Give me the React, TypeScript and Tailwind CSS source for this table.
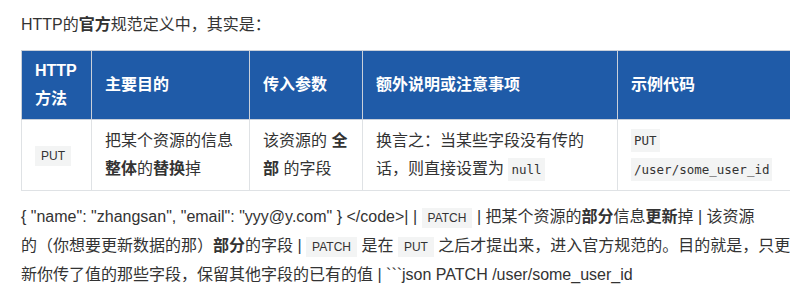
import React from 'react';

const font = { fontFamily: '"Liberation Sans", "Noto Sans CJK SC", sans-serif' };

function Code({ children, mono = false }: { children: React.ReactNode; mono?: boolean }) {
  return (
    <code
      className={
        mono
          ? 'bg-[#f3f4f4] px-[3px] py-[4px] text-[12.5px] text-[#333] font-["DejaVu_Sans_Mono",monospace]'
          : 'bg-[#f3f4f4] px-[6px] py-[3px] text-[12px] text-[#333] font-["Liberation_Sans",sans-serif]'
      }
    >
      {children}
    </code>
  );
}

export default function App() {
  return (
    <div className="w-[790px] h-[288px] overflow-hidden bg-white text-[#333]" style={font}>
      <div className="pl-[21px] pt-[11px]">
        <p className="text-[16px] leading-[27px] whitespace-nowrap">
          HTTP的<b>官方</b>规范定义中，其实是：
        </p>

        <table className="mt-[12px] w-[830px] table-fixed border-collapse text-[16px] leading-[28px]">
          <colgroup>
            <col className="w-[70px]" />
            <col className="w-[158px]" />
            <col className="w-[113px]" />
            <col className="w-[255px]" />
            <col className="w-[234px]" />
          </colgroup>
          <thead>
            <tr className="bg-[#1f5ba8] text-white font-bold">
              <th className="border border-[#c9d0da] px-[13px] py-[6px] text-left align-middle">
                HTTP
                <br />
                方法
              </th>
              <th className="border border-[#c9d0da] px-[13px] py-[6px] text-left align-middle">主要目的</th>
              <th className="border border-[#c9d0da] px-[13px] py-[6px] text-left align-middle">传入参数</th>
              <th className="border border-[#c9d0da] px-[13px] py-[6px] text-left align-middle">额外说明或注意事项</th>
              <th className="border border-[#c9d0da] px-[13px] py-[6px] text-left align-middle">示例代码</th>
            </tr>
          </thead>
          <tbody>
            <tr className="whitespace-nowrap">
              <td className="border border-[#dfe2e5] px-[13px] py-[6px] align-middle">
                <Code>PUT</Code>
              </td>
              <td className="border border-[#dfe2e5] px-[13px] py-[6px] align-middle">
                把某个资源的信息
                <br />
                <b>整体</b>的<b>替换</b>掉
              </td>
              <td className="border border-[#dfe2e5] px-[13px] py-[6px] align-middle">
                该资源的 <b>全</b>
                <br />
                <b>部</b> 的字段
              </td>
              <td className="border border-[#dfe2e5] px-[13px] py-[6px] align-middle">
                换言之：当某些字段没有传的
                <br />
                话，则直接设置为 <Code mono>null</Code>
              </td>
              <td className="border border-[#dfe2e5] px-[13px] py-[6px] align-middle">
                <Code mono>PUT</Code>
                <br />
                <Code mono>/user/some_user_id</Code>
              </td>
            </tr>
          </tbody>
        </table>

        <p className="mt-[12px] text-[16px] leading-[27px] whitespace-nowrap">
          {'{ "name": "zhangsan", "email": "yyy@y.com" } </code>| | '}
          <Code>PATCH</Code> | 把某个资源的<b>部分</b>信息<b>更新</b>掉 | 该资源
          <br />
          的（你想要更新数据的那）<b>部分</b>的字段 | <Code>PATCH</Code> 是在 <Code>PUT</Code>{' '}
          之后才提出来，进入官方规范的。目的就是，只更
          <br />
          新你传了值的那些字段，保留其他字段的已有的值 | ```json PATCH /user/some_user_id
        </p>
      </div>
    </div>
  );
}
